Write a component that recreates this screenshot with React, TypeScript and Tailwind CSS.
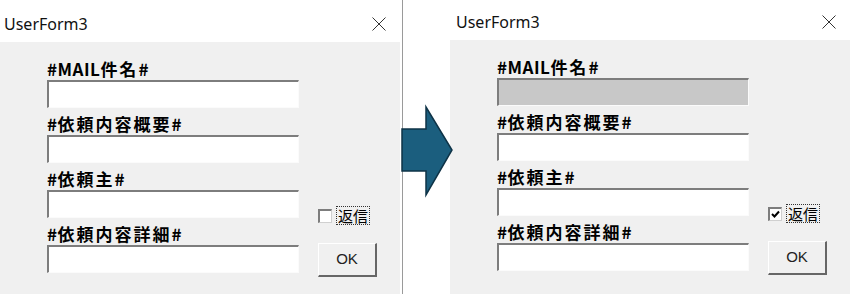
import React from "react";

const FIELDS = ["#MAIL件名#", "#依頼内容概要#", "#依頼主#", "#依頼内容詳細#"];

// CJK glyphs in the form labels run wider than the latin ones
function Label({ text }: { text: string }) {
  const parts = text.split(/([^\x00-\x7f]+)/).filter(Boolean);
  return (
    <>
      {parts.map((p, i) =>
        /[^\x00-\x7f]/.test(p) ? (
          <span key={i} className="tracking-[2px]">
            {p}
          </span>
        ) : (
          <span key={i} className="tracking-[0.5px]">
            {p}
          </span>
        )
      )}
    </>
  );
}

function CloseIcon() {
  return (
    <svg width="14" height="14" viewBox="0 0 14 14" className="shrink-0">
      <path d="M0.5 0.5 L13.5 13.5 M13.5 0.5 L0.5 13.5" stroke="#333" strokeWidth="1" fill="none" />
    </svg>
  );
}

function TextBox({ disabled }: { disabled?: boolean }) {
  return (
    <div
      className={
        disabled
          ? "h-[28px] w-[252px] border-t-2 border-l-2 border-b border-r border-t-[#7d7d7d] border-l-[#7d7d7d] border-b-[#fbfbfb] border-r-[#fbfbfb] bg-[#c8c8c8]"
          : "h-[28px] w-[252px] border-t-2 border-l-2 border-b border-r border-t-[#7d7d7d] border-l-[#7d7d7d] border-b-[#fbfbfb] border-r-[#fbfbfb] bg-white"
      }
    />
  );
}

function Dialog({ checked, locked, tight }: { checked?: boolean; locked?: boolean; tight?: boolean }) {
  return (
    <div className="flex h-[294px] w-[400px] flex-col">
      {/* title bar */}
      <div
        className={
          tight
            ? "flex h-[40px] items-center justify-between bg-white pl-[6px] pr-[14px] pt-[4px]"
            : "flex h-[42px] items-center justify-between bg-white pl-[4px] pr-[14px] pt-[5px]"
        }
      >
        <span className="font-['Noto_Sans',sans-serif] text-[16px] text-[#111]">UserForm3</span>
        <CloseIcon />
      </div>

      {/* body */}
      <div className="flex flex-1 bg-[#f0f0f0] pl-[47px] pt-[11px]">
        <div className="flex flex-col">
          {FIELDS.map((label, i) => (
            <div key={label} className="flex flex-col">
              <div className="flex h-[27px] items-end pb-[1px] font-['Noto_Sans_CJK_JP',sans-serif] text-[17px] leading-[21px] font-bold text-black">
                <Label text={label} />
              </div>
              <TextBox disabled={locked && i === 0} />
            </div>
          ))}
        </div>

        {/* side controls */}
        <div className="ml-[19px] flex flex-col pt-[153px]">
          <div className="flex items-center gap-[4px]">
            <div className="flex h-[14px] w-[14px] items-center justify-center border-t-2 border-l-2 border-b border-r border-t-[#7d7d7d] border-l-[#7d7d7d] border-b-[#d0d0d0] border-r-[#d0d0d0] bg-white">
              {checked && (
                <svg width="9" height="8" viewBox="0 0 9 8">
                  <path d="M1 4 L3.5 6.5 L8 1.5" stroke="#000" strokeWidth="2" fill="none" />
                </svg>
              )}
            </div>
            <span className="border border-dotted border-[#333] px-[1px] font-['Noto_Sans_CJK_JP',sans-serif] text-[15px] leading-[17px] text-black">
              返信
            </span>
          </div>
          <button className="mt-[18px] h-[34px] w-[59px] border-t border-l border-t-white border-l-white border-b-2 border-r-2 border-b-[#666] border-r-[#666] bg-[#f0f0f0] font-['Liberation_Sans',sans-serif] text-[15px] text-[#222]">
            OK
          </button>
        </div>
      </div>
    </div>
  );
}

export default function App() {
  return (
    <div className="relative flex h-[294px] w-[850px] bg-white">
      <div className="w-[403px] border-r border-[#9a9a9a]">
        <Dialog />
      </div>
      <div className="ml-[47px]">
        <Dialog checked locked tight />
      </div>

      {/* arrow between the two forms */}
      <svg className="absolute left-[400px] top-[104px]" width="56" height="94" viewBox="0 0 56 94">
        <polygon
          points="2,25 26,25 26,3 52,46 26,91 26,67 2,67"
          fill="#1b5e7e"
          stroke="#0e3347"
          strokeWidth="1.5"
          strokeLinejoin="miter"
        />
      </svg>
    </div>
  );
}
